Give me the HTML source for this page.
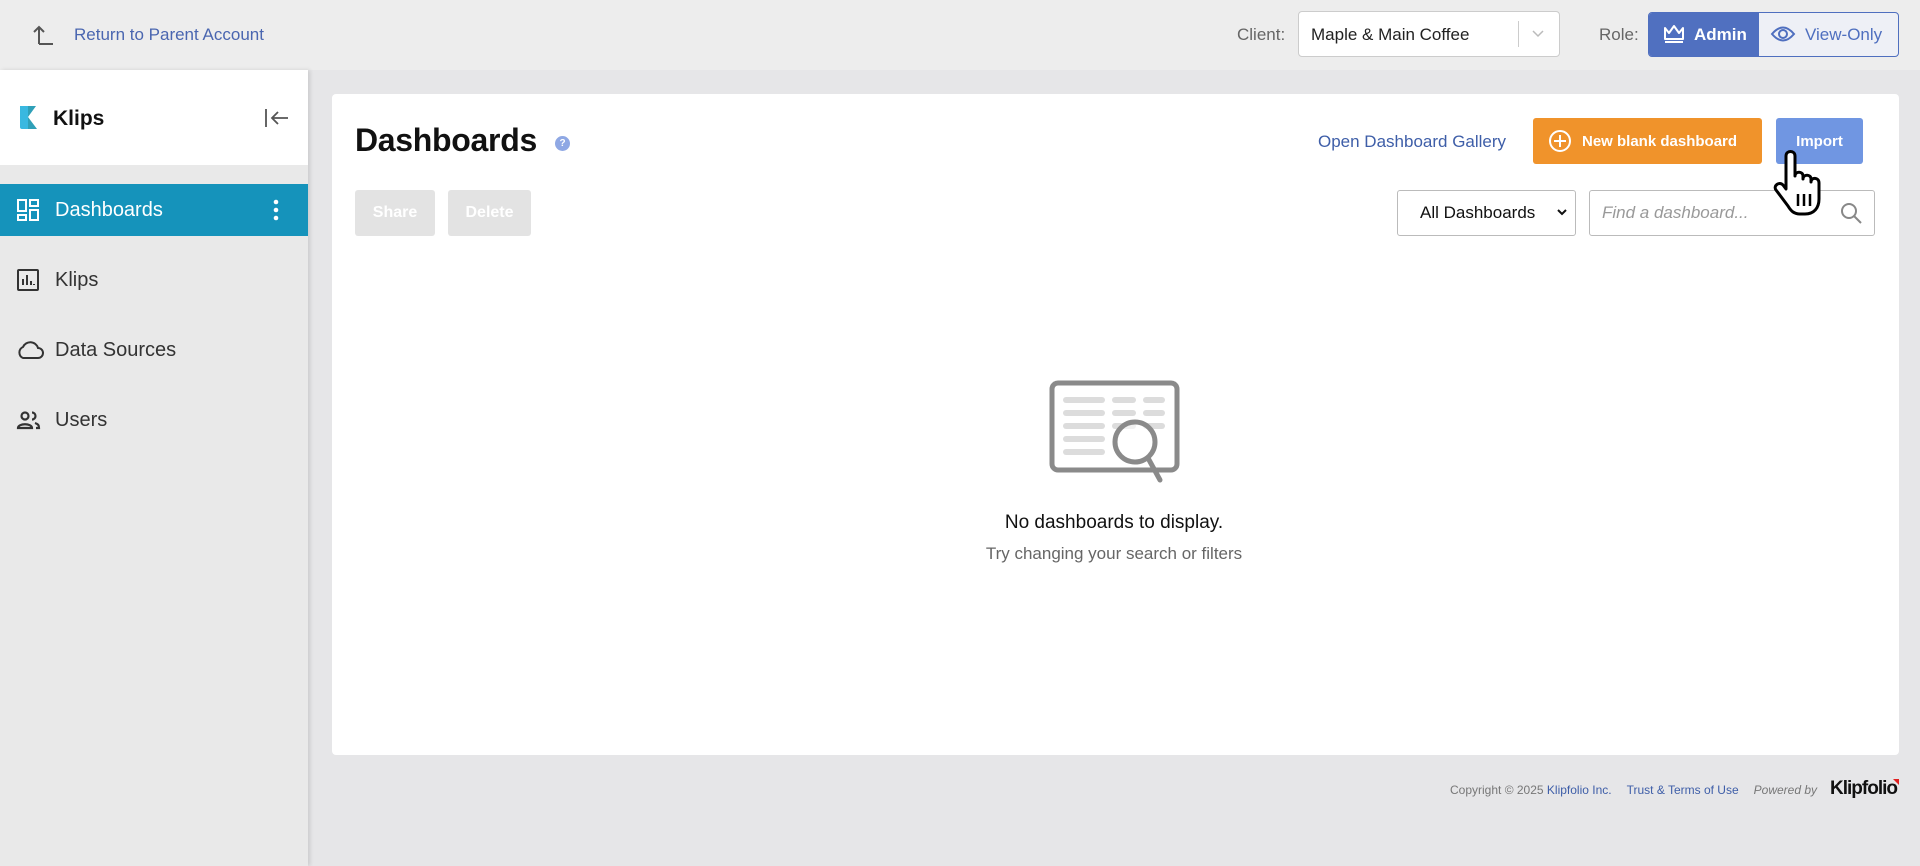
<!DOCTYPE html>
<html><head><meta charset="utf-8"><style>
*{box-sizing:border-box;margin:0;padding:0}
body{width:1920px;height:866px;overflow:hidden;background:#e6e6e8;font-family:"Liberation Sans",sans-serif;position:relative;color:#222}
.a{position:absolute}
.top{left:0;top:0;width:1920px;height:70px;background:#ededed}
.side{left:0;top:70px;width:308px;height:796px;background:#e9e9e9;box-shadow:2px 0 4px rgba(0,0,0,.12)}
.card{left:332px;top:94px;width:1567px;height:661px;background:#fff;border-radius:4px}
.nav{left:0;width:308px;height:52px;display:flex;align-items:center;font-size:20px;color:#333}
.nav svg{position:absolute;left:16px}
.nav span{position:absolute;left:55px}
.btn{border-radius:3px;display:flex;align-items:center;justify-content:center;font-size:16px;font-weight:bold;color:#fff}
</style></head><body>
<div class="a top"></div>
<svg class="a" style="left:32px;top:24px" width="24" height="22" viewBox="0 0 24 22"><path d="M7 20V3M2 8l5-5 5 5M7 20h14" stroke="#555" stroke-width="2" fill="none"/></svg>
<div class="a" style="left:74px;top:25px;font-size:17px;color:#4a66b0">Return to Parent Account</div>
<div class="a" style="left:1237px;top:25px;font-size:17px;color:#666">Client:</div>
<div class="a" style="left:1298px;top:11px;width:262px;height:46px;background:#fff;border:1px solid #ccc;border-radius:4px"></div>
<div class="a" style="left:1311px;top:25px;font-size:17px;color:#222">Maple &amp; Main Coffee</div>
<div class="a" style="left:1518px;top:21px;width:1px;height:26px;background:#ccc"></div>
<svg class="a" style="left:1531px;top:29px" width="14" height="10"><path d="M2 2l5 5 5-5" stroke="#bbb" stroke-width="1.5" fill="none"/></svg>
<div class="a" style="left:1599px;top:25px;font-size:17px;color:#666">Role:</div>
<div class="a" style="left:1648px;top:12px;width:251px;height:45px;border:1px solid #4f6fbf;border-radius:4px;background:#eef0f6;overflow:hidden">
<div class="a" style="left:0;top:0;width:110px;height:45px;background:#5070c0"></div></div>
<svg class="a" style="left:1662px;top:23px" width="24" height="22" viewBox="0 0 24 22"><path d="M3 5l4 5 5-7 5 7 4-5v11H3zM3 19h18" stroke="#fff" stroke-width="2" fill="none" stroke-linejoin="round"/></svg>
<div class="a" style="left:1694px;top:25px;font-size:17px;color:#fff;font-weight:bold">Admin</div>
<svg class="a" style="left:1770px;top:24px" width="26" height="20" viewBox="0 0 26 20"><path d="M2 10Q13-3 24 10Q13 23 2 10z" stroke="#4f6fbf" stroke-width="2" fill="none"/><circle cx="13" cy="10" r="4" stroke="#4f6fbf" stroke-width="2" fill="none"/></svg>
<div class="a" style="left:1805px;top:25px;font-size:17px;color:#4f6fbf">View-Only</div>

<div class="a side"></div>
<div class="a" style="left:0;top:70px;width:308px;height:95px;background:#fff"></div>
<svg class="a" style="left:19px;top:106px" width="22" height="23" viewBox="0 0 22 23"><path d="M1 0h8v23H3a2 2 0 0 1-2-2z" fill="#39b8e0"/><path d="M9 0h8l-8 11 9 12H9z" fill="#2fa0b8"/></svg>
<div class="a" style="left:53px;top:107px;font-size:21px;font-weight:bold;color:#111">Klips</div>
<svg class="a" style="left:264px;top:107px" width="26" height="22"><path d="M2 2v18M24 11H8M14 5l-6 6 6 6" stroke="#555" stroke-width="1.8" fill="none"/></svg>
<div class="a nav" style="top:184px;background:#1593bb;color:#fff">
<svg width="24" height="24" viewBox="0 0 24 24" fill="none" stroke="#fff" stroke-width="2"><rect x="2" y="2" width="8" height="11"/><rect x="14" y="2" width="8" height="6"/><rect x="2" y="17" width="8" height="5"/><rect x="14" y="12" width="8" height="10"/></svg>
<span>Dashboards</span>
<svg style="left:272px" width="8" height="24"><circle cx="4" cy="4" r="2.3" fill="#fff"/><circle cx="4" cy="12" r="2.3" fill="#fff"/><circle cx="4" cy="20" r="2.3" fill="#fff"/></svg></div>
<div class="a nav" style="top:254px"><svg width="24" height="24" viewBox="0 0 24 24" fill="none" stroke="#333" stroke-width="2"><rect x="2" y="2" width="20" height="20" rx="1"/><path d="M7 17v-6M11 17V7M15 17v-4M18 17v-1"/></svg><span>Klips</span></div>
<div class="a nav" style="top:324px"><svg width="28" height="24" viewBox="0 0 28 24" fill="none" stroke="#333" stroke-width="2"><path d="M7 20h15a5 5 0 0 0 0-10 8 8 0 0 0-15-1 6 6 0 0 0 0 11z"/></svg><span>Data Sources</span></div>
<div class="a nav" style="top:394px"><svg width="26" height="24" viewBox="0 0 26 24" fill="none" stroke="#333" stroke-width="2.2"><circle cx="9" cy="8" r="3.5"/><path d="M2 20c0-5 14-5 14 0zM16 4.5a3.5 3.5 0 0 1 0 7M19 15c3 1 4 2 4 5h-3"/></svg><span>Users</span></div>

<div class="a card"></div>
<div class="a" style="left:355px;top:122px;font-size:32px;font-weight:bold;color:#111;letter-spacing:-0.3px">Dashboards</div>
<div class="a" style="left:555px;top:136px;width:15px;height:15px;border-radius:50%;background:#8fa8e4;color:#fff;font-size:10px;font-weight:bold;text-align:center;line-height:15px">?</div>
<div class="a btn" style="left:355px;top:190px;width:80px;height:46px;background:#e3e3e3">Share</div>
<div class="a btn" style="left:448px;top:190px;width:83px;height:46px;background:#e3e3e3">Delete</div>
<div class="a" style="left:1318px;top:132px;font-size:17px;color:#3e5ea8">Open Dashboard Gallery</div>
<div class="a btn" style="left:1533px;top:118px;width:229px;height:46px;background:#f0932b;justify-content:flex-start;padding-left:15px;font-size:15px">
<svg width="24" height="24" viewBox="0 0 24 24" fill="none" stroke="#fff" stroke-width="2"><circle cx="12" cy="12" r="10"/><path d="M12 6v12M6 12h12"/></svg><span style="margin-left:10px">New blank dashboard</span></div>
<div class="a btn" style="left:1776px;top:118px;width:87px;height:46px;background:#7096e2;font-size:15px">Import</div>
<div class="a" style="left:1397px;top:190px;width:179px;height:46px;border:1px solid #bbb;border-radius:3px;background:#fff"></div>
<div class="a" style="left:1420px;top:203px;font-size:17px;color:#111">All Dashboards</div>
<svg class="a" style="left:1556px;top:208px" width="12" height="10"><path d="M2 2l4 4 4-4" stroke="#111" stroke-width="2" fill="none"/></svg>
<div class="a" style="left:1589px;top:190px;width:286px;height:46px;border:1px solid #bbb;border-radius:3px;background:#fff"></div>
<div class="a" style="left:1602px;top:203px;font-size:17px;color:#999;font-style:italic">Find a dashboard...</div>
<svg class="a" style="left:1839px;top:201px" width="24" height="24" fill="none" stroke="#888" stroke-width="2"><circle cx="10" cy="10" r="7"/><path d="M15 15l7 7"/></svg>
<svg class="a" style="left:1772px;top:150px" width="62" height="68" viewBox="0 0 62 68"><path d="M14 6c0-6 9-6 9 0v20c0-5 8-5 8 0v3c0-5 8-5 8 0v3c0-5 8-5 8 1v16c0 9-5 15-14 15H28c-6 0-9-3-12-8L4 40c-3-4 3-9 7-5l3 4z" fill="#fff" stroke="#000" stroke-width="3" stroke-linejoin="round"/><path d="M26 44v12M32 44v12M38 44v12" stroke="#000" stroke-width="2.5"/></svg>

<svg class="a" style="left:1049px;top:380px" width="132" height="112" viewBox="0 0 132 112">
<rect x="3" y="3" width="125" height="87" rx="6" fill="none" stroke="#8a8a8a" stroke-width="5"/>
<g fill="#dcdcdc"><rect x="14" y="17" width="42" height="6" rx="3"/><rect x="63" y="17" width="24" height="6" rx="3"/><rect x="94" y="17" width="22" height="6" rx="3"/>
<rect x="14" y="30" width="42" height="6" rx="3"/><rect x="63" y="30" width="24" height="6" rx="3"/><rect x="94" y="30" width="22" height="6" rx="3"/>
<rect x="14" y="43" width="42" height="6" rx="3"/><rect x="63" y="43" width="24" height="6" rx="3"/><rect x="94" y="43" width="22" height="6" rx="3"/>
<rect x="14" y="56" width="42" height="6" rx="3"/><rect x="14" y="69" width="42" height="6" rx="3"/></g>
<circle cx="86" cy="62" r="20" fill="#fff" fill-opacity=".6" stroke="#8a8a8a" stroke-width="5"/><path d="M99 78l12 22" stroke="#8a8a8a" stroke-width="5" stroke-linecap="round"/></svg>
<div class="a" style="left:832px;top:512px;width:564px;text-align:center;font-size:19px;color:#111">No dashboards to display.</div>
<div class="a" style="left:832px;top:544px;width:564px;text-align:center;font-size:17px;color:#666">Try changing your search or filters</div>

<div class="a" style="left:1450px;top:783px;font-size:12px;color:#777;white-space:nowrap">Copyright © 2025 <span style="color:#3e5ea8">Klipfolio Inc.</span><span style="color:#3e5ea8;margin-left:15px">Trust &amp; Terms of Use</span><i style="margin-left:15px">Powered by</i></div>
<div class="a" style="left:1830px;top:778px;font-size:19px;font-weight:bold;color:#111;letter-spacing:-1px;white-space:nowrap">Klipfolio</div>
<div class="a" style="left:1893px;top:779px;width:0;height:0;border-left:6px solid transparent;border-top:6px solid #e02020"></div>
</body></html>
